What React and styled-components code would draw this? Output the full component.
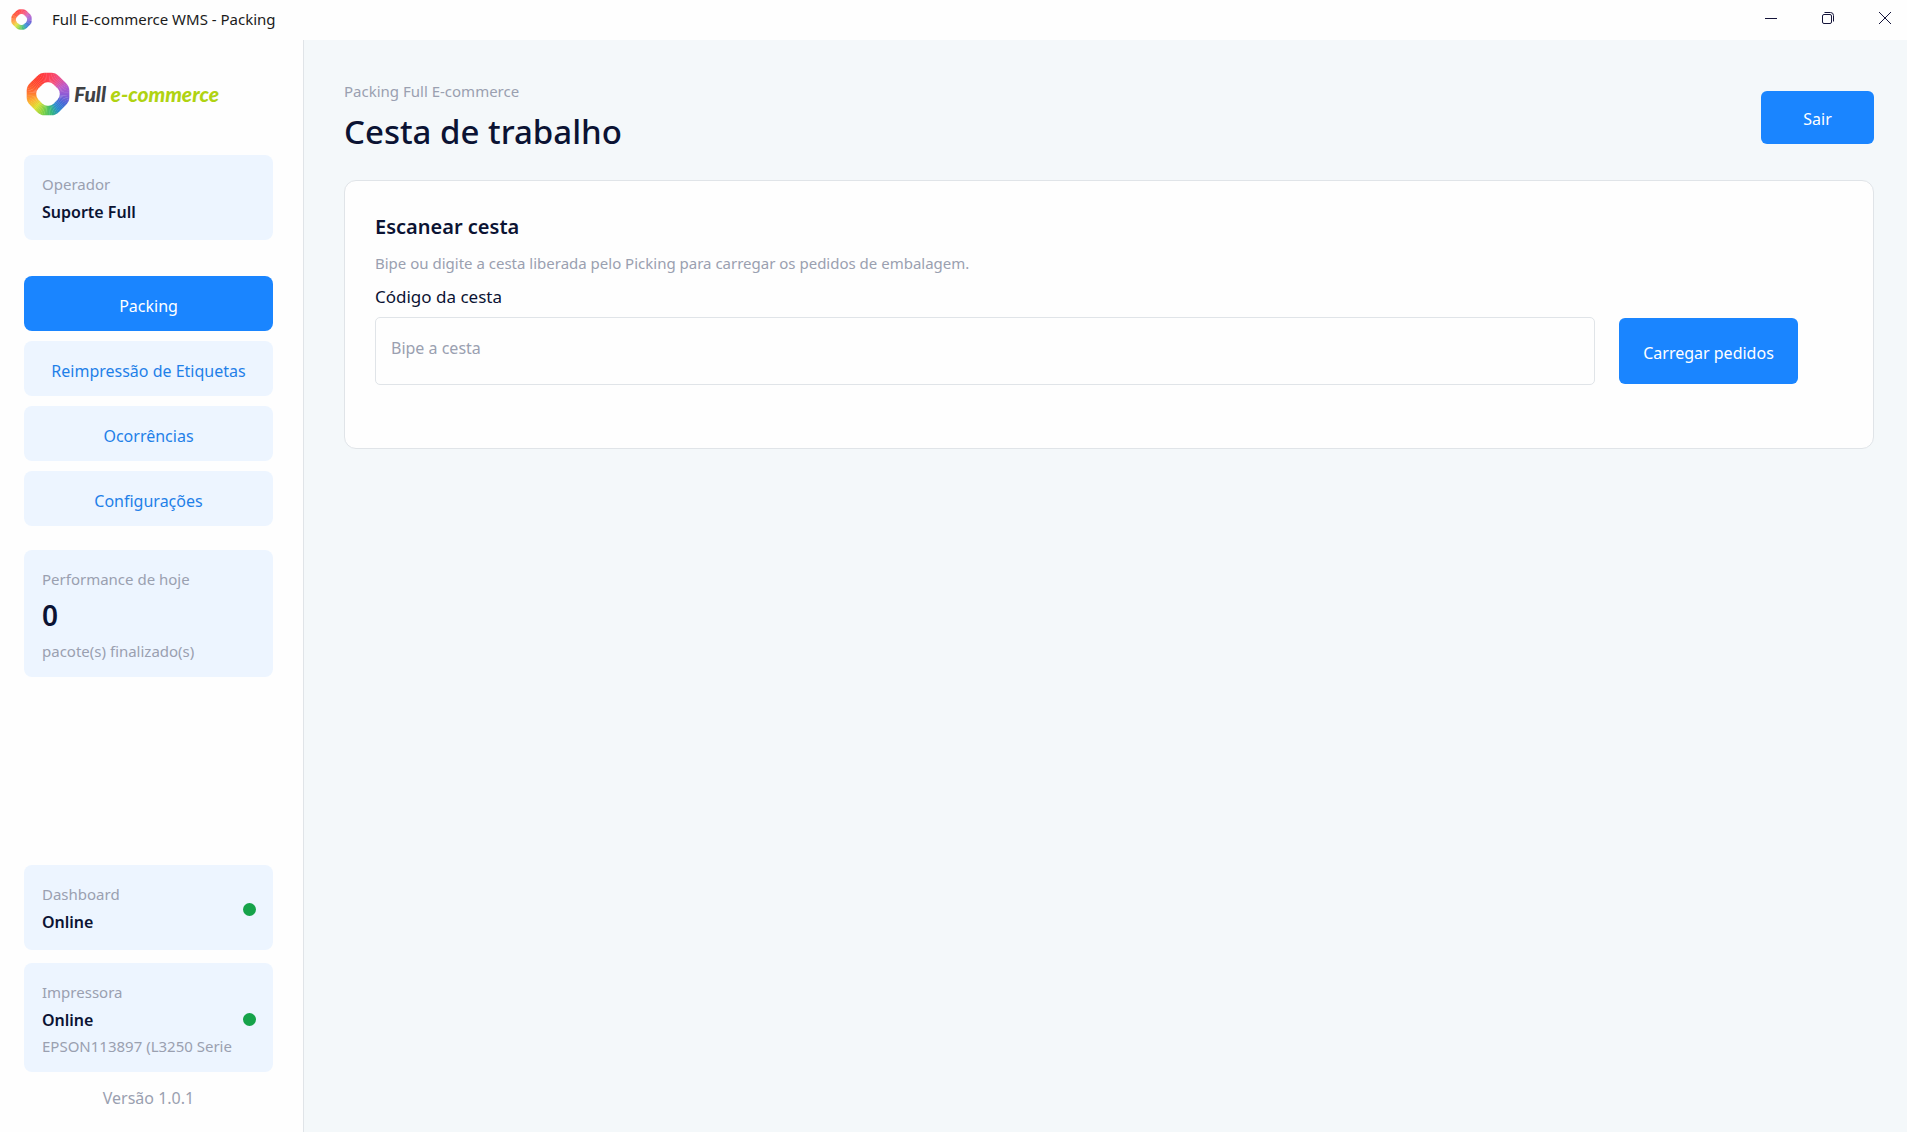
import React, { useState } from "react";
import styled, { createGlobalStyle } from "styled-components";

const GlobalStyle = createGlobalStyle`
  * {
    box-sizing: border-box;
  }

  body {
    margin: 0;
    background: #f4f8fa;
    color: #0b1333;
    font-family: "Segoe UI", "Noto Sans", sans-serif;
    font-size: 15px;
    line-height: 20px;
  }

  button,
  input {
    font-family: inherit;
  }
`;

const Window = styled.div`
  display: flex;
  flex-direction: column;
  min-height: 100vh;
`;

const TitleBar = styled.header`
  display: flex;
  align-items: center;
  height: 40px;
  padding: 0 0 2px 11px;
  background: #fefefe;
  color: #1b1b1b;
`;

const WindowTitle = styled.span`
  flex: 1;
  padding-left: 20px;
`;

const WindowButton = styled.button`
  display: flex;
  align-items: center;
  justify-content: center;
  width: 57px;
  height: 36px;
  align-self: flex-start;
  padding: 0;
  border: none;
  background: none;
  color: #14143a;

  &:last-child {
    width: 51px;
    padding-left: 7px;
  }
`;

const Body = styled.div`
  display: flex;
  flex: 1;
`;

const Sidebar = styled.aside`
  display: flex;
  flex-direction: column;
  width: 304px;
  padding: 32px 30px 21px 24px;
  background: #fefefe;
  border-right: 1px solid #e0e4e8;
`;

const Logo = styled.div`
  display: flex;
  align-items: center;
  gap: 4px;
  padding-left: 2px;
  margin-bottom: 39px;
  font-family: Lato, sans-serif;
  font-style: italic;
  font-weight: 900;
  font-size: 21px;
  color: #3f4144;
`;

const LogoAccent = styled.span`
  color: #b0d312;
`;

const InfoCard = styled.section`
  padding: 19px 18px 16px;
  background: #edf5ff;
  border-radius: 8px;
`;

const StatusCard = styled(InfoCard)`
  display: flex;
  align-items: center;
  gap: 11px;
  padding-right: 17px;
  margin-bottom: 13px;
`;

const StatusText = styled.div`
  flex: 1;
  min-width: 0;
  overflow: hidden;
  white-space: nowrap;
`;

const StatusDot = styled.span`
  flex: none;
  width: 13px;
  height: 13px;
  border-radius: 50%;
  background: #16a34a;
`;

const Muted = styled.div`
  color: #9aa0b0;
`;

const Strong = styled.div`
  margin-top: 6px;
  font-size: 16px;
  font-weight: 600;
  line-height: 24px;

  & + ${Muted} {
    margin-top: 4px;
  }
`;

const Count = styled.div`
  font-size: 28px;
  font-weight: 600;
  line-height: 36px;
  margin: 8px 0;
`;

const Nav = styled.nav`
  display: flex;
  flex-direction: column;
  gap: 10px;
  margin: 36px 0 24px;
`;

const Button = styled.button`
  height: 55px;
  padding: 4px 20px 0;
  border: none;
  border-radius: 8px;
  background: ${(props) => (props.$soft ? "#edf5ff" : "#1a85ff")};
  color: ${(props) => (props.$soft ? "#1f80e8" : "#fff")};
  font-size: 16px;
  white-space: nowrap;
  cursor: pointer;
`;

const LogoutButton = styled(Button)`
  width: 113px;
  height: 53px;
  border-radius: 6px;
`;

const LoadButton = styled(Button)`
  width: 179px;
  height: 66px;
  border-radius: 6px;
`;

const Spacer = styled.div`
  flex: 1;
`;

const Version = styled(Muted)`
  font-size: 16px;
  line-height: 26px;
  text-align: center;
`;

const Main = styled.main`
  flex: 1;
  min-width: 0;
  padding: 41px 33px 40px 40px;
`;

const PageHeader = styled.div`
  display: flex;
  align-items: center;
  justify-content: space-between;
  margin-bottom: 27px;
`;

const PageTitle = styled.h1`
  margin: 10px 0 0;
  font-size: 33px;
  font-weight: 500;
  line-height: 42px;
`;

const Panel = styled.form`
  padding: 32px 30px 63px;
  background: #fefefe;
  border: 1px solid #e0e4e8;
  border-radius: 12px;
`;

const PanelTitle = styled.h2`
  margin: 0 0 12px;
  font-size: 20px;
  font-weight: 600;
  line-height: 28px;
`;

const FieldLabel = styled.label`
  display: block;
  margin: 12px 0 8px;
  font-size: 17px;
  line-height: 24px;
`;

const FieldRow = styled.div`
  display: flex;
  align-items: center;
  gap: 24px;
  padding-right: 45px;
`;

const Input = styled.input`
  flex: 1;
  min-width: 0;
  height: 68px;
  padding: 0 15px 6px;
  border: 1px solid #e0e4e8;
  border-radius: 5px;
  background: #fefefe;
  color: inherit;
  font-size: 16px;

  &::placeholder {
    color: #9aa0b0;
    opacity: 1;
  }
`;

// colour stops round the ring, clockwise from the top
const RING_STOPS = [
  [0, [255, 66, 84]],
  [30, [240, 76, 130]],
  [60, [190, 92, 200]],
  [90, [140, 92, 214]],
  [120, [66, 104, 214]],
  [145, [40, 140, 205]],
  [165, [50, 180, 130]],
  [190, [120, 208, 70]],
  [220, [222, 224, 50]],
  [245, [252, 176, 50]],
  [275, [255, 112, 50]],
  [305, [255, 74, 44]],
  [335, [255, 58, 56]],
  [360, [255, 66, 84]],
];

function ringColor(angle) {
  const i = RING_STOPS.findIndex(([stop]) => stop > angle);
  const [from, a] = RING_STOPS[i - 1];
  const [to, b] = RING_STOPS[i];
  const t = (angle - from) / (to - from);
  return `rgb(${a.map((v, n) => Math.round(v + (b[n] - v) * t)).join(",")})`;
}

function point(angle) {
  const rad = ((angle - 90) * Math.PI) / 180;
  return `${32 + 46 * Math.cos(rad)} ${32 + 46 * Math.sin(rad)}`;
}

function RingLogo({ size, id }) {
  return (
    <svg width={size} height={size} viewBox="0 0 64 64" aria-hidden="true">
      <mask id={id}>
        <path
          d="M27 1H37Q43 1 48 6L58 16Q63 21 63 27V37Q63 43 58 48L48 58Q43 63 37 63H27Q21 63 16 58L6 48Q1 43 1 37V27Q1 21 6 16L16 6Q21 1 27 1Z"
          fill="#fff"
        />
        <path
          d="M31 15H33Q37 15 40 18L46 24Q49 27 49 31V33Q49 37 46 40L40 46Q37 49 33 49H31Q27 49 24 46L18 40Q15 37 15 33V31Q15 27 18 24L24 18Q27 15 31 15Z"
          fill="#000"
        />
      </mask>
      <g mask={`url(#${id})`}>
        {Array.from({ length: 72 }, (_, i) => i * 5).map((angle) => (
          <path
            key={angle}
            d={`M32 32L${point(angle)}L${point(angle + 6)}Z`}
            fill={ringColor(angle)}
          />
        ))}
      </g>
    </svg>
  );
}

const MENU = ["Packing", "Reimpressão de Etiquetas", "Ocorrências", "Configurações"];

function App() {
  const [active, setActive] = useState("Packing");
  const [basket, setBasket] = useState("");

  return (
    <>
      <GlobalStyle />
      <Window>
        <TitleBar>
          <RingLogo size={21} id="ring-small" />
          <WindowTitle>Full E-commerce WMS - Packing</WindowTitle>
          <WindowButton aria-label="Minimizar">
            <svg width="12" height="12" viewBox="0 0 12 12" stroke="currentColor">
              <path d="M0 6.5h12" />
            </svg>
          </WindowButton>
          <WindowButton aria-label="Restaurar">
            <svg width="12" height="12" viewBox="0 0 12 12" fill="none" stroke="currentColor">
              <rect x="0.5" y="2.5" width="9" height="9" rx="1.5" />
              <path d="M2.5 0.5h6a3 3 0 0 1 3 3v6" />
            </svg>
          </WindowButton>
          <WindowButton aria-label="Fechar">
            <svg width="12" height="12" viewBox="0 0 12 12" stroke="currentColor">
              <path d="M0 0l12 12M12 0L0 12" />
            </svg>
          </WindowButton>
        </TitleBar>
        <Body>
          <Sidebar>
            <Logo>
              <RingLogo size={44} id="ring-large" />
              <span>
                Full <LogoAccent>e-commerce</LogoAccent>
              </span>
            </Logo>
            <InfoCard>
              <Muted>Operador</Muted>
              <Strong>Suporte Full</Strong>
            </InfoCard>
            <Nav>
              {MENU.map((item) => (
                <Button
                  key={item}
                  $soft={item !== active}
                  onClick={() => setActive(item)}
                >
                  {item}
                </Button>
              ))}
            </Nav>
            <InfoCard>
              <Muted>Performance de hoje</Muted>
              <Count>0</Count>
              <Muted>pacote(s) finalizado(s)</Muted>
            </InfoCard>
            <Spacer />
            <StatusCard>
              <StatusText>
                <Muted>Dashboard</Muted>
                <Strong>Online</Strong>
              </StatusText>
              <StatusDot />
            </StatusCard>
            <StatusCard>
              <StatusText>
                <Muted>Impressora</Muted>
                <Strong>Online</Strong>
                <Muted>EPSON113897 (L3250 Series)</Muted>
              </StatusText>
              <StatusDot />
            </StatusCard>
            <Version>Versão 1.0.1</Version>
          </Sidebar>
          <Main>
            <PageHeader>
              <div>
                <Muted>Packing Full E-commerce</Muted>
                <PageTitle>Cesta de trabalho</PageTitle>
              </div>
              <LogoutButton>Sair</LogoutButton>
            </PageHeader>
            <Panel onSubmit={(event) => event.preventDefault()}>
              <PanelTitle>Escanear cesta</PanelTitle>
              <Muted>
                Bipe ou digite a cesta liberada pelo Picking para carregar os
                pedidos de embalagem.
              </Muted>
              <FieldLabel htmlFor="basket">Código da cesta</FieldLabel>
              <FieldRow>
                <Input
                  id="basket"
                  placeholder="Bipe a cesta"
                  value={basket}
                  onChange={(event) => setBasket(event.target.value)}
                />
                <LoadButton type="submit">Carregar pedidos</LoadButton>
              </FieldRow>
            </Panel>
          </Main>
        </Body>
      </Window>
    </>
  );
}

export default App;
